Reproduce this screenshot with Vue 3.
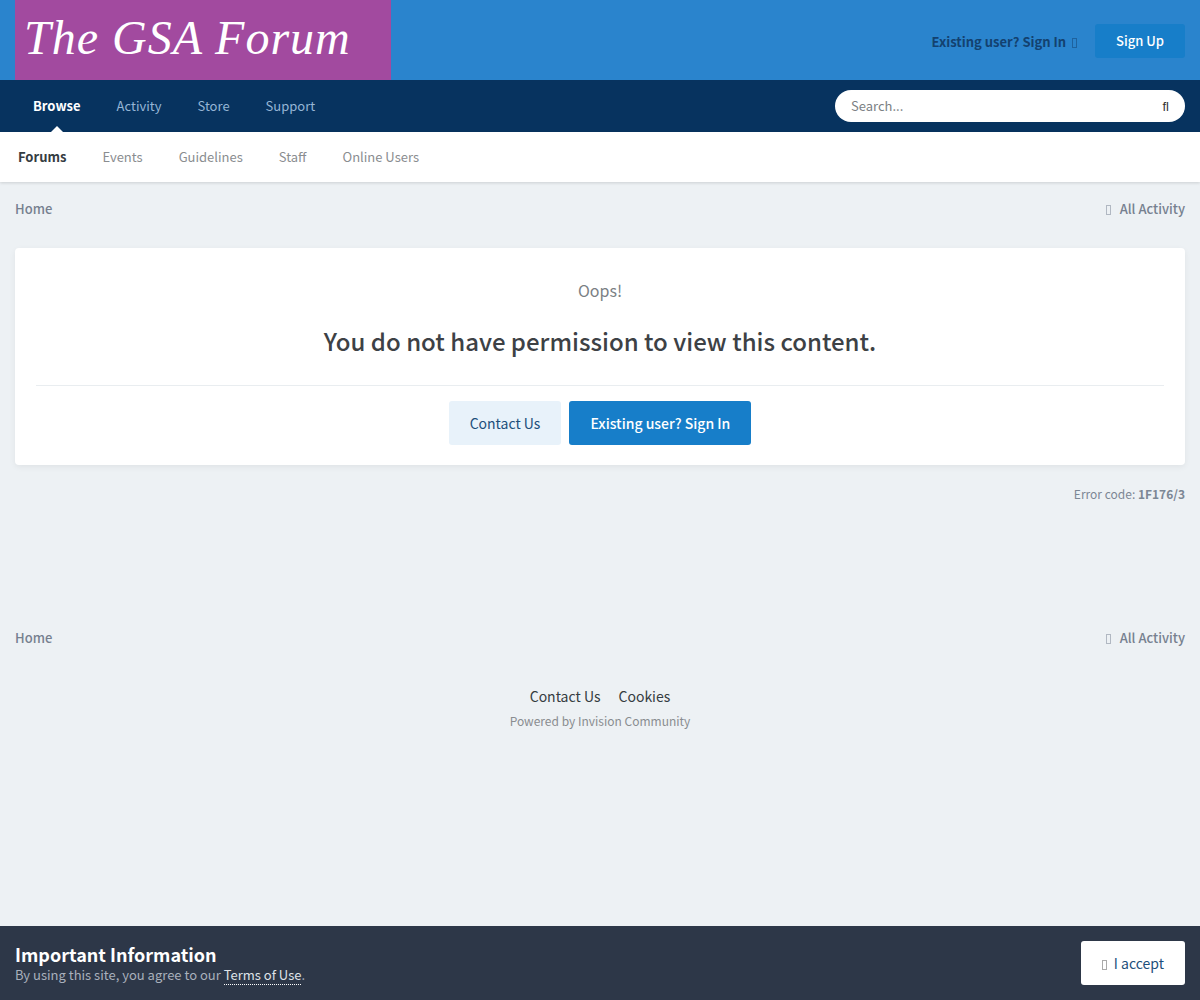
<script setup>
const mainNav = ['Activity', 'Store', 'Support']
const subNav = ['Events', 'Guidelines', 'Staff', 'Online Users']
</script>

<template>
  <div class="page">
    <header class="top">
      <a class="logo">The GSA Forum</a>
      <div class="user-links">
        <a class="sign-in">Existing user? Sign In <span class="ico after"></span></a>
        <a class="sign-up">Sign Up</a>
      </div>
    </header>

    <nav class="main-nav">
      <ul>
        <li class="active">Browse</li>
        <li v-for="item in mainNav" :key="item">{{ item }}</li>
      </ul>
      <div class="search">
        <span>Search...</span>
        <span class="search-ico">fl</span>
      </div>
    </nav>

    <nav class="sub-nav">
      <ul>
        <li class="active">Forums</li>
        <li v-for="item in subNav" :key="item">{{ item }}</li>
      </ul>
    </nav>

    <main class="content">
      <div class="crumbs first">
        <span>Home</span>
        <span><span class="ico"></span>All Activity</span>
      </div>

      <section class="card">
        <p class="oops">Oops!</p>
        <h1>You do not have permission to view this content.</h1>
        <div class="actions">
          <a class="btn light">Contact Us</a>
          <a class="btn primary">Existing user? Sign In</a>
        </div>
      </section>

      <p class="error-code">Error code: <strong>1F176/3</strong></p>

      <div class="crumbs second">
        <span>Home</span>
        <span><span class="ico"></span>All Activity</span>
      </div>

      <footer class="foot">
        <div class="foot-links">
          <a>Contact Us</a>
          <a>Cookies</a>
        </div>
        <p>Powered by Invision Community</p>
      </footer>
    </main>

    <aside class="notice">
      <div>
        <h2>Important Information</h2>
        <p>By using this site, you agree to our <a>Terms of Use</a>.</p>
      </div>
      <a class="accept"><span class="ico"></span>I accept</a>
    </aside>
  </div>
</template>

<style>
body {
  background: #edf1f4;
}
</style>

<style scoped>
.page {
  display: flex;
  flex-direction: column;
  min-height: 1000px;
  font-family: "Noto Sans CJK JP", "Noto Sans", sans-serif;
  font-size: 13px;
  line-height: 20px;
  color: #353c41;
}

ul {
  display: flex;
  margin: 0;
  padding: 0;
  list-style: none;
}

.top {
  display: flex;
  align-items: center;
  justify-content: space-between;
  height: 80px;
  padding: 0 15px;
  background: #2a84cd;
}

.logo {
  display: block;
  box-sizing: border-box;
  width: 376px;
  height: 80px;
  padding: 10px 0 0 9px;
  background: #a24a9f;
  color: #fff;
  font-family: "Liberation Serif", serif;
  font-size: 48px;
  font-style: italic;
  letter-spacing: 1px;
  line-height: 56px;
  white-space: nowrap;
}

.user-links {
  display: flex;
  align-items: center;
  gap: 18px;
  margin-top: 2px;
}

.sign-in {
  padding-top: 2px;
  color: #10365f;
  font-weight: 700;
  opacity: 0.85;
}

.sign-up {
  padding: 0 21px;
  border-radius: 3px;
  background: #177ec9;
  color: #fff;
  font-weight: 500;
  line-height: 34px;
}

/* missing icon font glyph, renders as an empty box */
.ico {
  display: inline-block;
  box-sizing: border-box;
  width: 5px;
  height: 10px;
  margin-right: 9px;
  border: 1px solid currentColor;
  opacity: 0.5;
  vertical-align: -1px;
}

.ico.after {
  margin: 0 0 0 3px;
}

.main-nav {
  display: flex;
  align-items: center;
  justify-content: space-between;
  height: 52px;
  padding: 0 15px 0 33px;
  background: #07335f;
}

.main-nav ul {
  gap: 36px;
  color: #95b6d6;
}

.main-nav .active {
  position: relative;
  color: #fff;
  font-weight: 700;
}

.main-nav .active::after {
  content: '';
  position: absolute;
  left: 50%;
  bottom: -16px;
  margin-left: -6px;
  border: 6px solid transparent;
  border-top: 0;
  border-bottom-color: #fff;
}

.search {
  display: flex;
  align-items: center;
  justify-content: space-between;
  box-sizing: border-box;
  width: 350px;
  height: 32px;
  padding: 0 16px;
  border-radius: 16px;
  background: #fff;
  color: #7b7f84;
}

.search-ico {
  margin-top: 2px;
  color: #333;
  font-family: "Liberation Sans", sans-serif;
  font-size: 13px;
  font-variant-ligatures: none;
}

.sub-nav {
  height: 50px;
  padding: 0 18px;
  background: #fff;
  box-shadow: 0 1px 3px rgba(0, 0, 0, 0.14);
}

.sub-nav ul {
  gap: 36px;
  align-items: center;
  height: 50px;
  color: #8a8d90;
}

.sub-nav .active {
  color: #353c41;
  font-weight: 700;
}

.content {
  flex: 1;
  padding: 0 15px;
}

.crumbs {
  display: flex;
  justify-content: space-between;
  color: #76808f;
  font-weight: 500;
}

.crumbs.first {
  padding-top: 17px;
}

.crumbs.second {
  margin-top: 125px;
}

.card {
  margin-top: 29px;
  padding: 30px 21px 20px;
  border-radius: 4px;
  background: #fff;
  box-shadow: 0 2px 6px rgba(0, 0, 0, 0.06);
  text-align: center;
}

.oops {
  margin: 0;
  color: #7b7f84;
  font-size: 16px;
  line-height: 24px;
}

h1 {
  margin: 21px 0 0;
  padding-bottom: 26px;
  border-bottom: 1px solid #e9edf0;
  color: #3d4145;
  font-size: 24px;
  font-weight: 500;
  line-height: 36px;
}

.actions {
  display: flex;
  justify-content: center;
  gap: 8px;
  margin-top: 15px;
}

.btn {
  padding: 0 21px;
  border-radius: 3px;
  font-size: 14px;
  line-height: 44px;
}

.btn.light {
  background: #e8f2fa;
  color: #1d4f7b;
}

.btn.primary {
  background: #177ec9;
  color: #fff;
  font-weight: 500;
}

.error-code {
  margin: 20px 0 0;
  color: #7c8794;
  font-size: 12px;
  line-height: 18px;
  text-align: right;
}

.foot {
  margin-top: 38px;
  text-align: center;
}

.foot-links {
  display: flex;
  justify-content: center;
  gap: 18px;
  color: #353c41;
  font-size: 14px;
}

.foot p {
  margin: 6px 0 0;
  color: #8a8d90;
  font-size: 12px;
  line-height: 18px;
}

.notice {
  display: flex;
  align-items: center;
  justify-content: space-between;
  height: 74px;
  padding: 0 15px;
  background: #2d3748;
  color: #a9b0bc;
}

.notice h2 {
  margin: 0;
  color: #fff;
  font-size: 18px;
  font-weight: 700;
  line-height: 24px;
}

.notice p {
  margin: 0;
  font-size: 13px;
  line-height: 18px;
}

.notice p a {
  border-bottom: 1px dotted #fff;
  color: #dfe3e8;
}

.accept {
  padding: 0 21px;
  border-radius: 3px;
  background: #fff;
  color: #1d4f7b;
  font-size: 14px;
  line-height: 44px;
}

.accept .ico {
  margin-right: 7px;
  color: #555;
}
</style>
